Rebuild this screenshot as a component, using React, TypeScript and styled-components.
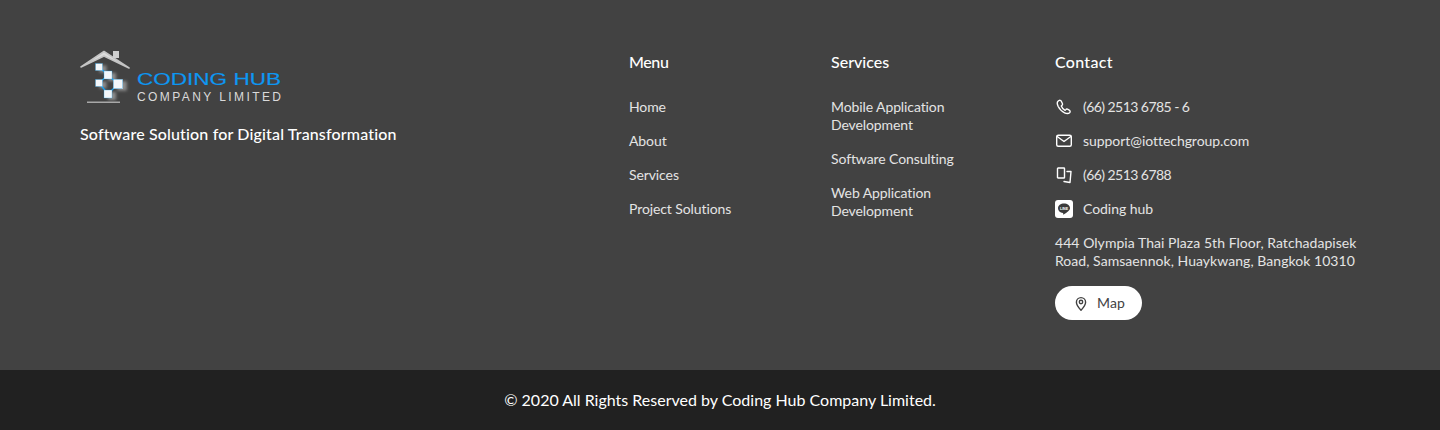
import React from "react";
import styled, { createGlobalStyle } from "styled-components";

const Global = createGlobalStyle`
  html, body { margin: 0; padding: 0; background: #424242; }
  body { font-family: "Lato", "Open Sans", "Liberation Sans", sans-serif; }
  * { box-sizing: border-box; }
`;
const Main = styled.footer`
  height: 370px; background: #424242; padding: 50px 80px 0;
  display: grid; grid-template-columns: 549px 202px 224px 1fr;
`;
const Brand = styled.div`display: flex; flex-direction: column; gap: 17px;`;
const Tagline = styled.div`font-size: 16px; line-height: 24px; font-weight: 500; color: #fff; letter-spacing: 0.15px;`;
const Column = styled.div`display: flex; flex-direction: column;`;
const Heading = styled.h3<{ $spacing?: number }>`
  margin: 0 0 24px; font-size: 16px; line-height: 24px; font-weight: 500; color: #fff;
  letter-spacing: ${p => p.$spacing ?? 0}px;
`;
const List = styled.div`display: flex; flex-direction: column; gap: 16px;`;
const Item = styled.div<{ $width?: number }>`
  font-size: 14px; line-height: 18px; color: #e4e4e4; font-weight: 400; letter-spacing: -0.1px;
  ${p => p.$width ? `width: ${p.$width}px;` : ""}
`;
const Row = styled.div<{ $numeric?: boolean }>`
  display: flex; align-items: center; gap: 10px; height: 18px; font-size: 14px; line-height: 18px;
  color: #e4e4e4; font-weight: 400;
  letter-spacing: ${p => p.$numeric ? "-0.55px" : "-0.05px"};
`;
const Address = styled.div`font-size: 14px; line-height: 18px; color: #e4e4e4; font-weight: 400; letter-spacing: 0.05px; white-space: nowrap;`;
const MapButton = styled.button`
  margin-top: 16px; width: 87px; height: 34px; border: 0; border-radius: 17px; background: #fff; color: #424242;
  display: flex; align-items: center; gap: 7px; padding: 0 0 1px 17px;
  font-family: inherit; font-size: 14px; font-weight: 400; letter-spacing: 0.1px;
`;
const Bottom = styled.div`
  height: 60px; background: #212121; color: #fff; font-size: 16px; font-weight: 400; padding-bottom: 2px;
  display: flex; align-items: center; justify-content: center;
`;
const IconBox = styled.svg`width: 18px; height: 18px; flex: none; fill: none; stroke: #fff; stroke-width: 1.4; stroke-linecap: round; stroke-linejoin: round;`;

const cubes: [number, number, number][] = [[19, 17, 7], [28, 25, 8], [38, 34, 9.5], [19, 33, 7], [28, 44, 8]];

const Logo = () => (
  <svg width="201" height="55" viewBox="0 0 201 55" style={{ display: "block" }}>
    <defs><filter id="b" x="-30%" y="-30%" width="160%" height="160%"><feGaussianBlur stdDeviation="1.4" /></filter></defs>
    <g filter="url(#b)" fill="#8c8c8c">
      {cubes.map(([x, y, s]) => <rect key={`${x}${y}`} x={x - s / 2 + 4} y={y - s / 2 + 2} width={s} height={s} />)}
    </g>
    <path d="M1 17 24 1.500 49 18 24 6z" fill="#dcdcdc" stroke="#c4c4c4" strokeWidth="1.600" strokeLinejoin="round" />
    <rect x="33" y="1" width="6" height="7" fill="#cfcfcf" />
    <path d="M19 17 28 25 38 34 28 44M28 25 19 33 28 44" fill="none" stroke="#18a0f0" strokeWidth="1.300" />
    {cubes.map(([x, y, s]) => <rect key={`${x}-${y}`} x={x - s / 2} y={y - s / 2} width={s} height={s} fill="#f4f7fa" stroke="#1aa0ee" strokeWidth=".3" />)}
    <rect x="7" y="51.500" width="33" height="1.500" fill="#a8a8a8" />
    <text x="57" y="35" fontFamily="Liberation Sans" fontSize="16.500" fill="#0d97f2" stroke="#0d97f2" strokeWidth=".15" textLength="144" lengthAdjust="spacingAndGlyphs">CODING HUB</text>
    <text x="57" y="51" fontFamily="Liberation Sans" fontSize="12" fill="#dadada" textLength="144" lengthAdjust="spacing" style={{ whiteSpace: "pre" }}>COMPANY LIMITED</text>
  </svg>
);

const PhoneIcon = () => <IconBox viewBox="0 0 18 18"><path d="M4 2.500 3 3.300C2 4.200 2 6 3.200 8.500c1.500 2.800 3.800 5.200 6.400 6.300 2 .9 3.800 1 5-.1.900-.9.600-2-.4-2.600l-1.700-.9c-.7-.3-1.200-.2-1.700.4l-.7.8C8.600 11.600 7 9.800 6.300 8l.8-.8c.5-.5.600-1 .3-1.700L6.300 3.200C5.800 2.300 4.800 2 4 2.500z" /></IconBox>;
const MailIcon = () => <IconBox viewBox="0 0 18 18"><rect x="1.700" y="3.200" width="14.600" height="11" rx="1.500" /><path d="m2.200 4.500 6.800 5 6.800-5" /></IconBox>;
const DevicesIcon = () => <IconBox viewBox="0 0 18 18"><rect x="2.500" y="2" width="7" height="10" rx=".6" /><path d="M12 5.500h4l-1 11-6-1" /></IconBox>;
const LineIcon = () => (
  <svg width="18" height="18" viewBox="0 0 18 18" style={{ flex: "none" }}>
    <rect width="18" height="18" rx="3" fill="#fff" />
    <path d="M9 3.500c-3.300 0-6 2-6 4.800 0 2.500 2.100 4.300 4.900 4.700.5.100.3.700.2 1.300 0 .3.200.4.500.2 1.700-1 3.300-2.100 4.600-3.300C14.300 10.200 15 9.300 15 8.300 15 5.500 12.300 3.500 9 3.500z" fill="#3b3b3b" />
    <text x="9" y="9.500" fontFamily="Liberation Sans" fontSize="3.600" fontWeight="700" fill="#fff" textAnchor="middle">LINE</text>
  </svg>
);
const PinIcon = () => (
  <svg width="18" height="18" viewBox="0 0 18 18" fill="none" stroke="#424242" strokeWidth="1.400" strokeLinejoin="round" style={{ flex: "none" }}>
    <path d="M9 16.200c-2.800-3-4.600-5.500-4.600-8a4.600 4.600 0 0 1 9.200 0c0 2.500-1.800 5-4.600 8z" />
    <circle cx="9" cy="8" r="1.700" />
  </svg>
);

export default function App() {
  return (
    <>
      <Global />
      <Main>
        <Brand>
          <Logo />
          <Tagline>Software Solution for Digital Transformation</Tagline>
        </Brand>
        <Column>
          <Heading $spacing={-0.4}>Menu</Heading>
          <List>
            <Item>Home</Item>
            <Item>About</Item>
            <Item>Services</Item>
            <Item>Project Solutions</Item>
          </List>
        </Column>
        <Column>
          <Heading>Services</Heading>
          <List>
            <Item $width={150}>Mobile Application Development</Item>
            <Item>Software Consulting</Item>
            <Item $width={150}>Web Application Development</Item>
          </List>
        </Column>
        <Column>
          <Heading $spacing={0.3}>Contact</Heading>
          <List>
            <Row $numeric><PhoneIcon />(66) 2513 6785 - 6</Row>
            <Row><MailIcon />support@iottechgroup.com</Row>
            <Row $numeric><DevicesIcon />(66) 2513 6788</Row>
            <Row><LineIcon />Coding hub</Row>
            <Address>444 Olympia Thai Plaza 5th Floor, Ratchadapisek<br />Road, Samsaennok, Huaykwang, Bangkok 10310</Address>
          </List>
          <MapButton><PinIcon />Map</MapButton>
        </Column>
      </Main>
      <Bottom>© 2020 All Rights Reserved by Coding Hub Company Limited.</Bottom>
    </>
  );
}
